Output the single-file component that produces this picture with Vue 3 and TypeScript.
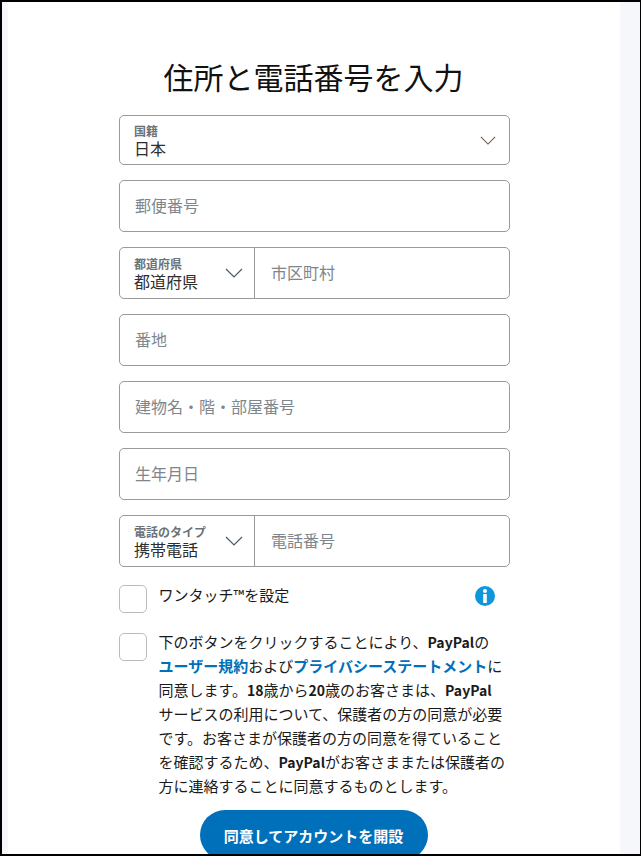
<script setup lang="ts">
const labelled = ['郵便番号']
</script>

<template>
  <div class="frame">
    <aside class="strip left"></aside>
    <main class="page">
      <h1 class="title">住所と電話番号を入力</h1>
      <form class="form" @submit.prevent>
        <div class="field select country">
          <div class="stack">
            <span class="mini">国籍</span>
            <span class="value">日本</span>
          </div>
          <svg class="chev" viewBox="0 0 18 10"><path d="M1 1l8 8 8-8" /></svg>
        </div>

        <div v-for="p in labelled" :key="p" class="field tall"><span class="ph">{{ p }}</span></div>

        <div class="field tall split">
          <div class="select part">
            <div class="stack">
              <span class="mini">都道府県</span>
              <span class="value">都道府県</span>
            </div>
            <svg class="chev" viewBox="0 0 18 10"><path d="M1 1l8 8 8-8" /></svg>
          </div>
          <span class="ph side">市区町村</span>
        </div>

        <div class="field tall"><span class="ph">番地</span></div>
        <div class="field tall"><span class="ph">建物名・階・部屋番号</span></div>
        <div class="field tall"><span class="ph">生年月日</span></div>

        <div class="field tall split">
          <div class="select part">
            <div class="stack">
              <span class="mini">電話のタイプ</span>
              <span class="value">携帯電話</span>
            </div>
            <svg class="chev" viewBox="0 0 18 10"><path d="M1 1l8 8 8-8" /></svg>
          </div>
          <span class="ph side">電話番号</span>
        </div>

        <div class="check-row one">
          <span class="box"></span>
          <span class="check-label">ワンタッチ™を設定</span>
          <svg class="info" viewBox="0 0 20 20">
            <circle cx="10" cy="10" r="10" fill="#0f97dc" />
            <circle cx="10" cy="5" r="2" fill="#fff" />
            <rect x="8.2" y="8" width="3.6" height="9" fill="#fff" />
          </svg>
        </div>

        <div class="check-row terms">
          <span class="box"></span>
          <p class="legal">下のボタンをクリックすることにより、<b>PayPal</b>の<br /><a>ユーザー規約</a>および<a>プライバシーステートメント</a>に<br />同意します。<b>18</b>歳から<b>20</b>歳のお客さまは、<b>PayPal</b><br />サービスの利用について、保護者の方の同意が必要<br />です。お客さまが保護者の方の同意を得ていること<br />を確認するため、<b>PayPal</b>がお客さままたは保護者の<br />方に連絡することに同意するものとします。</p>
        </div>

        <button class="submit" type="submit">同意してアカウントを開設</button>
      </form>
    </main>
    <aside class="strip right"></aside>
  </div>
</template>

<style>
html, body { margin: 0; padding: 0; background: #fff; }
</style>

<style scoped>
.frame {
  box-sizing: border-box;
  width: 641px;
  height: 856px;
  border: 2px solid #000;
  border-right-width: 1px;
  display: flex;
  overflow: hidden;
  font-family: "Noto Sans CJK JP", "Noto Sans", sans-serif;
  color: #1a1a1a;
  background: #fff;
}
.strip { flex: none; background: #f5f7fa; }
.left { width: 6px; }
.right { width: 20px; }
.page { flex: 1; min-width: 0; padding-left: 111px; }
.title {
  margin: 0;
  padding-top: 53px;
  width: 389px;
  height: 60px;
  font-size: 30px;
  line-height: 42px;
  font-weight: 400;
  text-align: center;
  color: #111;
  white-space: nowrap;
}
.form { width: 391px; display: flex; flex-direction: column; gap: 15px; }
.field {
  box-sizing: border-box;
  height: 50px;
  border: 1px solid #9a9a9a;
  border-radius: 5px;
  display: flex;
  align-items: center;
  padding: 0 15px 2px 15px;
  background: #fff;
}
.tall { height: 52px; }
.split { padding: 0; }
.select { display: flex; align-items: center; justify-content: space-between; }
.part {
  box-sizing: border-box;
  width: 135px;
  height: 100%;
  flex: none;
  border-right: 1px solid #9a9a9a;
  padding: 0 11px 0 14px;
}
.country { padding: 0 13px 0 14px; }
.stack { display: flex; flex-direction: column; padding-top: 2px; }
.mini { font-size: 12px; line-height: 14px; color: #6c7378; font-weight: 700; }
.value { font-size: 16px; line-height: 20px; color: #2c2e2f; }
.chev { width: 16px; height: 9px; fill: none; stroke: #4a5a66; stroke-width: 1.2; }
.country .chev { stroke: #6b5a46; }
.part .chev { width: 18px; height: 10px; }
.ph { font-size: 16px; color: #7e868c; }
.side { padding: 0 0 3px 16px; }
.check-row { display: flex; align-items: flex-start; }
.one { margin-top: 3px; height: 29px; position: relative; }
.terms { margin-top: 4px; }
.box {
  box-sizing: border-box;
  flex: none;
  width: 28px;
  height: 28px;
  border: 1px solid #b9bcbf;
  border-radius: 5px;
  margin-right: 11.5px;
  background: #fff;
}
.check-label { font-size: 15px; line-height: 20px; color: #1a1a1a; }
.info { position: absolute; left: 356px; top: 1px; width: 20px; height: 20px; }
.legal { margin: -3px 0 0; font-size: 15px; line-height: 24px; color: #1a1a1a; white-space: nowrap; }
.legal b { font-weight: 600; font-size: 14px; }
.legal a { color: #0070ba; font-weight: 700; }
.submit {
  align-self: center;
  margin: -3px 2px 0 0;
  flex: none;
  width: 228px;
  height: 50px;
  border: 0;
  border-radius: 25px;
  background: #0070ba;
  color: #fff;
  font: 700 15px "Noto Sans CJK JP", sans-serif;
}
</style>
